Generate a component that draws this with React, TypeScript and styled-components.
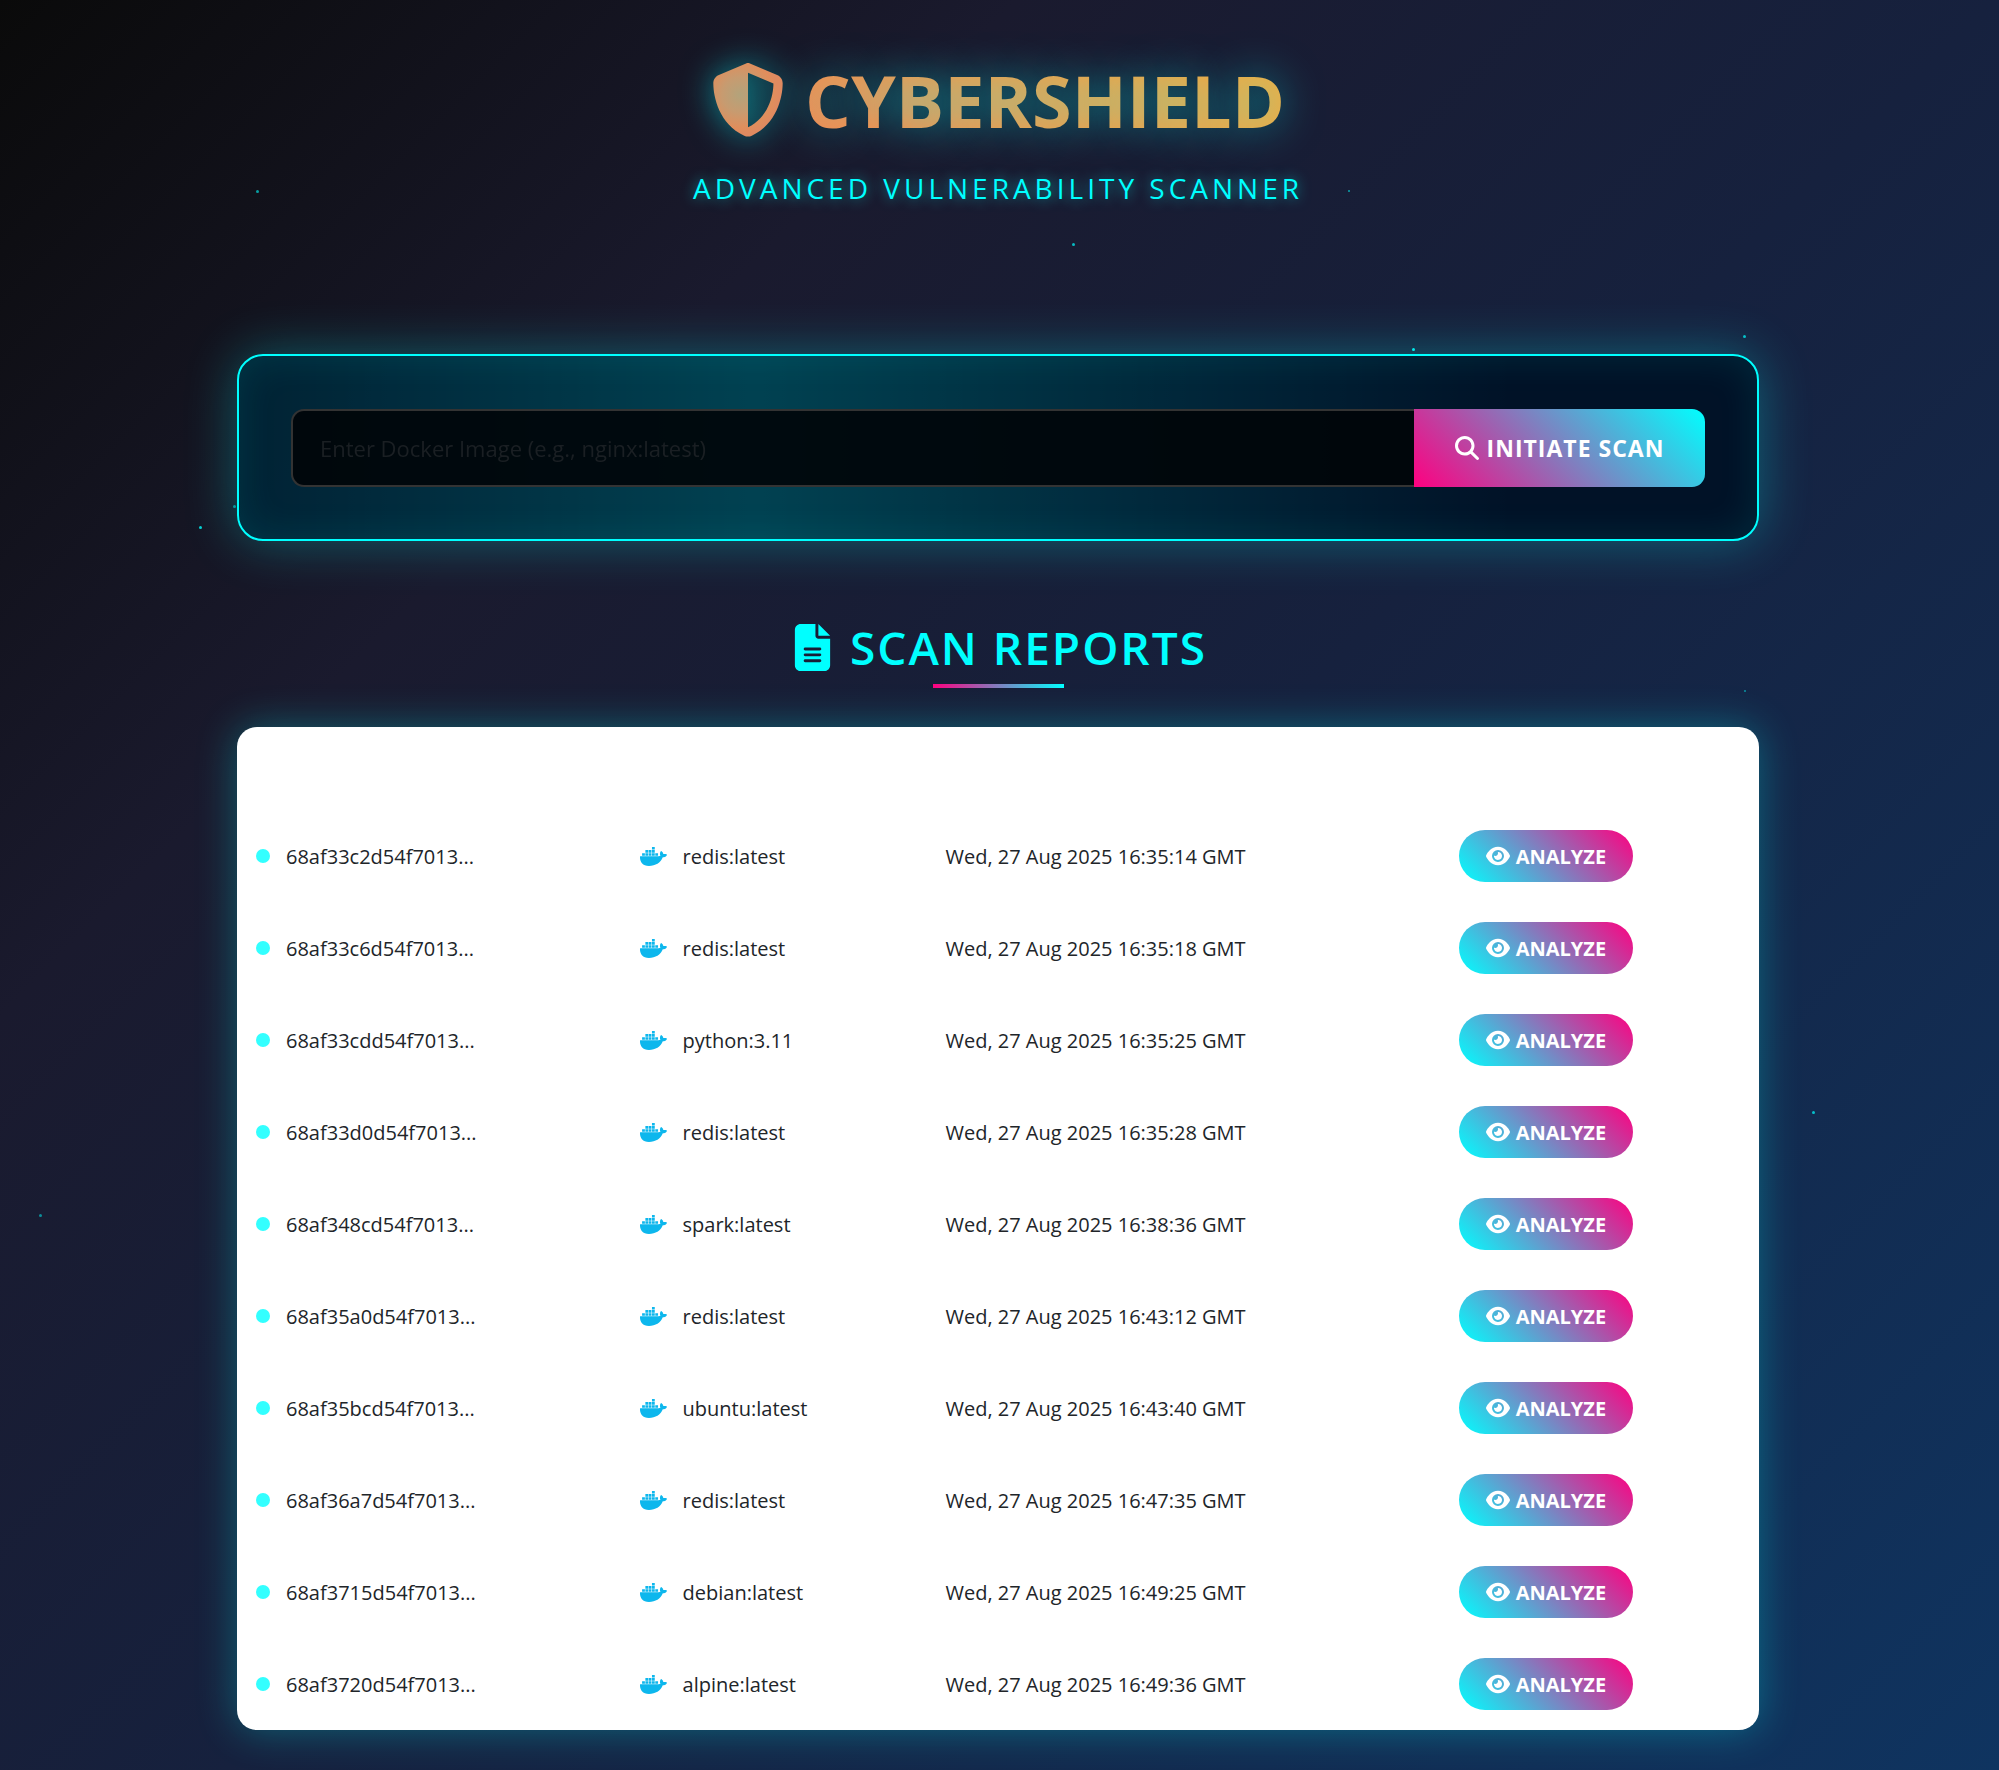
import React from "react";
import styled, { createGlobalStyle } from "styled-components";
import { FaDocker, FaEye, FaFileLines, FaMagnifyingGlass } from "react-icons/fa6";

const cyan = "#00ffff";
const pink = "#ff0080";

const GlobalStyle = createGlobalStyle`
  *, *::before, *::after { box-sizing: border-box; }
  body {
    margin: 0;
    background: #0f3460;
    font-family: "Open Sans", "Noto Sans", sans-serif;
    color: #212529;
  }
`;

const Page = styled.div`
  position: relative;
  min-height: 100vh;
  overflow: hidden;
  padding: 51px 27px 38px 24px;
  background: linear-gradient(135deg, #0a0a0a 0%, #1a1a2e 27%, #16213e 53%, #0f3460 100%);
`;

const Particle = styled.span<{ $x: number; $y: number; $size: number; $fade: number }>`
  position: absolute;
  left: ${(p) => p.$x}%;
  top: ${(p) => p.$y}px;
  width: ${(p) => p.$size}px;
  height: ${(p) => p.$size}px;
  border-radius: 50%;
  background: ${cyan};
  opacity: ${(p) => p.$fade};
`;

const Container = styled.main`
  position: relative;
  max-width: 1522px;
  margin: 0 auto;
`;

const Header = styled.header`
  display: flex;
  flex-direction: column;
  align-items: center;
  height: 303px;
`;

const Brand = styled.h1`
  display: flex;
  align-items: center;
  gap: 20px;
  margin: 0;
  font-size: 72px;
  line-height: 98px;
  font-weight: 700;
  color: transparent;
  background: linear-gradient(45deg, #ff7c4c, #fc9844 50%, #fcaa38);
  background-clip: text;
  -webkit-background-clip: text;
  text-shadow: 0 0 40px rgba(0, 255, 255, 0.5);
`;

const BrandIcon = styled.svg`
  width: 74px;
  height: 74px;
  filter: drop-shadow(0 0 16px rgba(0, 255, 255, 0.5));
`;

const Tagline = styled.p`
  margin: 19px 0 0;
  font-size: 28px;
  line-height: 40px;
  letter-spacing: 4px;
  text-transform: uppercase;
  color: ${cyan};
  text-shadow: 0 0 13px rgba(0, 255, 255, 0.6);
`;

const ScanPanel = styled.section`
  border: 2px solid ${cyan};
  border-radius: 26px;
  padding: 53px 52px 52px;
  background: linear-gradient(90deg, rgba(0, 255, 255, 0.065) 0%, rgba(0, 255, 255, 0.2) 34%, rgba(0, 255, 255, 0) 84%),
    rgba(0, 18, 38, 0.95);
  box-shadow: 0 0 52px rgba(0, 255, 255, 0.3), inset 0 0 40px rgba(0, 255, 255, 0.1);
`;

const ScanForm = styled.form`
  display: flex;
  height: 78px;
`;

const ImageInput = styled.input`
  flex: 1;
  min-width: 0;
  padding: 0 27px;
  border: 2px solid #333;
  border-right: 0;
  border-radius: 13px 0 0 13px;
  background: rgba(0, 4, 8, 0.9);
  color: #fff;
  font: inherit;
  font-size: 22px;
  &::placeholder {
    color: #212529;
    opacity: 0.8;
  }
`;

const ScanButton = styled.button`
  display: flex;
  align-items: center;
  justify-content: center;
  gap: 8px;
  width: 291px;
  border: 0;
  border-radius: 0 13px 13px 0;
  background: linear-gradient(45deg, ${pink}, ${cyan});
  color: #fff;
  font: inherit;
  font-size: 23px;
  font-weight: 700;
  letter-spacing: 1px;
  text-transform: uppercase;
`;

const SectionTitle = styled.h2`
  display: flex;
  flex-direction: column;
  align-items: center;
  gap: 5px;
  margin: 74px 0 39px;
  font-size: 46px;
  line-height: 64px;
  font-weight: 600;
  letter-spacing: 2px;
  text-transform: uppercase;
  color: ${cyan};
  &::after {
    content: "";
    width: 131px;
    height: 4px;
    background: linear-gradient(90deg, ${pink}, ${cyan});
  }
`;

const TitleRow = styled.span`
  display: flex;
  align-items: center;
  gap: 14px;
`;

const ReportCard = styled.section`
  overflow: hidden;
  border-radius: 20px;
  background: #fff;
  box-shadow: 0 0 40px rgba(0, 255, 255, 0.3);
`;

const ReportTable = styled.table`
  width: 100%;
  table-layout: fixed;
  border-collapse: collapse;
  font-size: 20px;
`;

const HeadCell = styled.th<{ $width: number }>`
  width: ${(p) => p.$width}%;
  height: 83px;
  padding: 0;
`;

const Cell = styled.td<{ $center?: boolean }>`
  height: 92px;
  padding: 0 19px;
  text-align: ${(p) => (p.$center ? "center" : "left")};
`;

const CellContent = styled.span`
  display: flex;
  align-items: center;
  gap: 16px;
`;

const StatusDot = styled.span`
  width: 14px;
  height: 14px;
  border-radius: 50%;
  background: #33ffff;
`;

const AnalyzeButton = styled.button`
  display: inline-flex;
  align-items: center;
  justify-content: center;
  gap: 6px;
  width: 174px;
  height: 52px;
  border: 0;
  border-radius: 26px;
  background: linear-gradient(45deg, ${cyan}, ${pink});
  color: #fff;
  font: inherit;
  font-weight: 700;
  text-transform: uppercase;
  vertical-align: middle;
`;

const particles = [
  { x: 12.8, y: 190, size: 3, fade: 0.6 },
  { x: 67.45, y: 190, size: 2, fade: 0.6 },
  { x: 53.65, y: 243, size: 3, fade: 0.7 },
  { x: 70.65, y: 348, size: 3, fade: 0.9 },
  { x: 87.2, y: 335, size: 3, fade: 0.7 },
  { x: 9.95, y: 526, size: 3, fade: 0.8 },
  { x: 11.65, y: 505, size: 3, fade: 0.5 },
  { x: 87.25, y: 690, size: 2, fade: 0.5 },
  { x: 90.65, y: 1111, size: 3, fade: 0.7 },
  { x: 1.95, y: 1214, size: 3, fade: 0.5 },
];

const reports = [
  { id: "68af33c2d54f7013...", image: "redis:latest", time: "Wed, 27 Aug 2025 16:35:14 GMT" },
  { id: "68af33c6d54f7013...", image: "redis:latest", time: "Wed, 27 Aug 2025 16:35:18 GMT" },
  { id: "68af33cdd54f7013...", image: "python:3.11", time: "Wed, 27 Aug 2025 16:35:25 GMT" },
  { id: "68af33d0d54f7013...", image: "redis:latest", time: "Wed, 27 Aug 2025 16:35:28 GMT" },
  { id: "68af348cd54f7013...", image: "spark:latest", time: "Wed, 27 Aug 2025 16:38:36 GMT" },
  { id: "68af35a0d54f7013...", image: "redis:latest", time: "Wed, 27 Aug 2025 16:43:12 GMT" },
  { id: "68af35bcd54f7013...", image: "ubuntu:latest", time: "Wed, 27 Aug 2025 16:43:40 GMT" },
  { id: "68af36a7d54f7013...", image: "redis:latest", time: "Wed, 27 Aug 2025 16:47:35 GMT" },
  { id: "68af3715d54f7013...", image: "debian:latest", time: "Wed, 27 Aug 2025 16:49:25 GMT" },
  { id: "68af3720d54f7013...", image: "alpine:latest", time: "Wed, 27 Aug 2025 16:49:36 GMT" },
];

function Shield() {
  return (
    <BrandIcon viewBox="0 0 512 512" aria-hidden="true">
      <defs>
        <radialGradient id="shield-fill" gradientUnits="userSpaceOnUse" cx="200" cy="220" r="270">
          <stop offset="0" stopColor="#b3a37b" />
          <stop offset="0.45" stopColor="#c79b70" />
          <stop offset="0.85" stopColor="#e08e5c" />
          <stop offset="1" stopColor="#df8a60" />
        </radialGradient>
      </defs>
      <path
        fill="url(#shield-fill)"
        d="M256 0c4.600 0 9.200 1 13.400 2.900L457.700 82.800c22 9.300 38.400 31 38.300 57.200c-.5 99.200-41.300 280.700-213.600 363.200c-16.700 8-36.100 8-52.800 0C57.300 420.700 16.500 239.200 16 140c-.1-26.200 16.300-47.900 38.300-57.200L242.700 2.900C246.800 1 251.400 0 256 0zm0 66.800V444.800C394 378 431.100 230.100 432 141.400L256 66.800z"
      />
    </BrandIcon>
  );
}

export default function App() {
  return (
    <Page>
      <GlobalStyle />
      {particles.map((p) => (
        <Particle key={`${p.x}-${p.y}`} $x={p.x} $y={p.y} $size={p.size} $fade={p.fade} />
      ))}
      <Container>
        <Header>
          <Brand>
            <Shield />
            CYBERSHIELD
          </Brand>
          <Tagline>Advanced Vulnerability Scanner</Tagline>
        </Header>

        <ScanPanel>
          <ScanForm onSubmit={(e) => e.preventDefault()}>
            <ImageInput
              type="text"
              aria-label="Docker image"
              placeholder="Enter Docker Image (e.g., nginx:latest)"
            />
            <ScanButton type="submit">
              <FaMagnifyingGlass size={24} aria-hidden />
              Initiate Scan
            </ScanButton>
          </ScanForm>
        </ScanPanel>

        <SectionTitle>
          <TitleRow>
            <FaFileLines size={47} aria-hidden />
            Scan Reports
          </TitleRow>
        </SectionTitle>

        <ReportCard>
          <ReportTable>
            <thead>
              <tr>
                <HeadCell $width={25.2} aria-label="Scan ID" />
                <HeadCell $width={20.1} aria-label="Image" />
                <HeadCell $width={26.7} aria-label="Timestamp" />
                <HeadCell $width={28} aria-label="Action" />
              </tr>
            </thead>
            <tbody>
              {reports.map((r) => (
                <tr key={r.id}>
                  <Cell>
                    <CellContent>
                      <StatusDot />
                      {r.id}
                    </CellContent>
                  </Cell>
                  <Cell>
                    <CellContent>
                      <FaDocker size={27} color="#0db7ed" aria-hidden />
                      {r.image}
                    </CellContent>
                  </Cell>
                  <Cell>{r.time}</Cell>
                  <Cell $center>
                    <AnalyzeButton type="button">
                      <FaEye size={24} aria-hidden />
                      Analyze
                    </AnalyzeButton>
                  </Cell>
                </tr>
              ))}
            </tbody>
          </ReportTable>
        </ReportCard>
      </Container>
    </Page>
  );
}
